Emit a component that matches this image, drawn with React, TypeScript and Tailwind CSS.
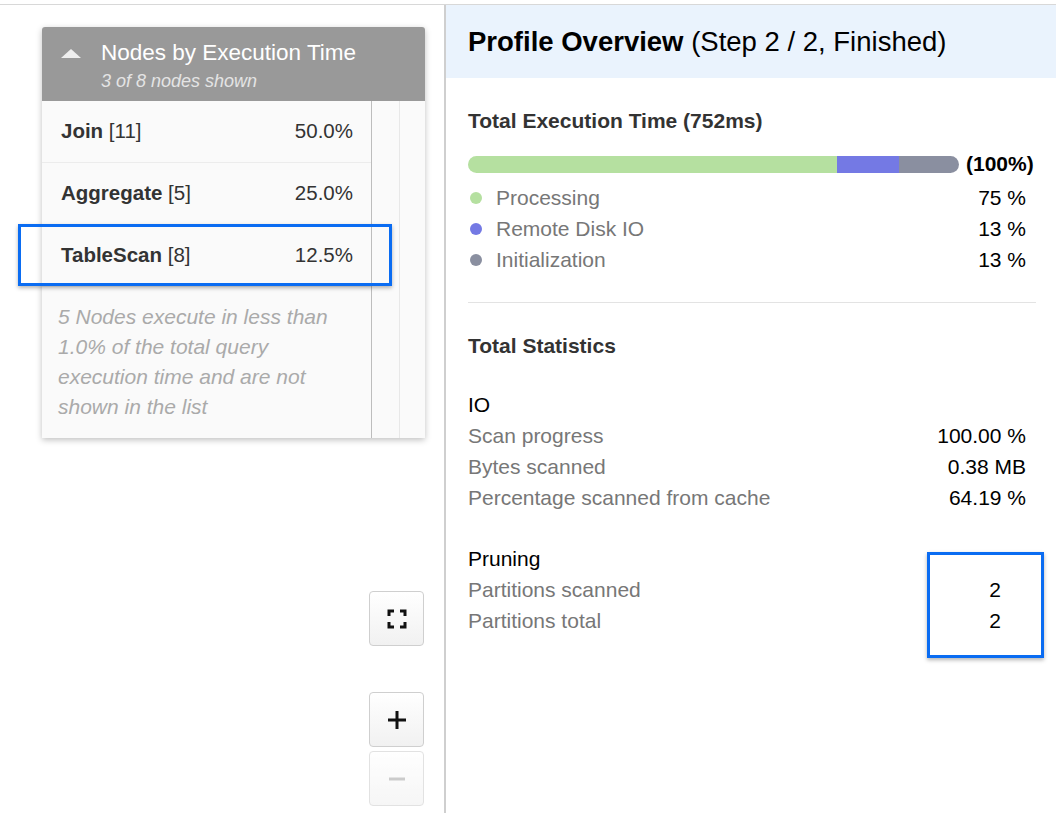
import React from 'react';

const NODES = [
  { name: 'Join', id: 11, pct: '50.0%' },
  { name: 'Aggregate', id: 5, pct: '25.0%' },
  { name: 'TableScan', id: 8, pct: '12.5%' },
];

const LEGEND = [
  { label: 'Processing', value: '75 %', dot: 'bg-[#b5e0a0]' },
  { label: 'Remote Disk IO', value: '13 %', dot: 'bg-[#7479e4]' },
  { label: 'Initialization', value: '13 %', dot: 'bg-[#8a8fa0]' },
];

function StatRow({ label, value }: { label: string; value: string }) {
  return (
    <div className="flex items-center justify-between h-[31px]">
      <span className="text-[#777]">{label}</span>
      <span className="text-black pr-[10px]">{value}</span>
    </div>
  );
}

function NodesCard() {
  return (
    <div className="ml-[42px] mt-[22px] w-[383px] rounded-t-[3px] shadow-[0_2px_6px_rgba(0,0,0,0.25)] bg-white">
      <div className="h-[74px] bg-[#999] rounded-t-[3px] pl-[18px] pt-[10px]">
        <div className="flex items-center">
          <svg width="22" height="12" viewBox="0 0 22 12" className="mr-[19px] mt-[2px]">
            <polygon points="11,1 21,10 1,10" fill="#eee" />
          </svg>
          <span className="text-white text-[22.5px] leading-[32px]">Nodes by Execution Time</span>
        </div>
        <div className="ml-[41px] mt-[2px] text-[18px] italic text-[#e4e4e4] leading-[20px]">3 of 8 nodes shown</div>
      </div>
      <div className="flex h-[337px]">
        <div className="w-[330px] bg-[#fafafa] border-r border-[#bdbdbd]">
          {NODES.map((n) => (
            <div
              key={n.name}
              className="h-[62px] flex items-center justify-between pl-[19px] pr-[18px] border-b border-[#ececec] text-[20.5px] text-[#333]"
            >
              <span>
                <span className="font-bold">{n.name}</span> [{n.id}]
              </span>
              <span>{n.pct}</span>
            </div>
          ))}
          <div className="pl-[16px] pr-[20px] pt-[15px] text-[21px] leading-[30px] italic text-[#aaa]">
            5 Nodes execute in less than 1.0% of the total query execution time and are not shown in the list
          </div>
        </div>
        <div className="w-[28px] bg-[#fafafa] border-r border-[#e8e8e8]" />
        <div className="flex-1 bg-[#fafafa]" />
      </div>
    </div>
  );
}

function MapButton({ children, disabled }: { children: React.ReactNode; disabled?: boolean }) {
  return (
    <button
      className={`w-[55px] h-[55px] rounded-[4px] border border-[#cfcfcf] bg-gradient-to-b from-white to-[#f1f1f1] flex items-center justify-center ${
        disabled ? 'opacity-60' : ''
      }`}
    >
      {children}
    </button>
  );
}

export default function App() {
  return (
    <div className="w-[1056px] h-[813px] bg-white pt-[4px] font-['Liberation_Sans',Arial,sans-serif] overflow-hidden relative">
      <div className="flex h-full border-t border-[#d8d8d8]">
        <div className="w-[446px] flex flex-col border-r-2 border-[#cfcfcf]">
          <NodesCard />
          <div className="flex flex-col items-end mr-[20px] mt-[153px]">
            <MapButton>
              <svg width="20" height="20" viewBox="0 0 20 20">
                <path d="M2 7V2h5M13 2h5v5M18 13v5h-5M7 18H2v-5" fill="none" stroke="#111" strokeWidth="3" />
              </svg>
            </MapButton>
            <div className="h-[46px]" />
            <MapButton>
              <svg width="20" height="20" viewBox="0 0 20 20">
                <path d="M10 1v18M1 10h18" stroke="#111" strokeWidth="3" />
              </svg>
            </MapButton>
            <div className="h-[4px]" />
            <MapButton disabled>
              <svg width="20" height="20" viewBox="0 0 20 20">
                <path d="M2 10h16" stroke="#aaa" strokeWidth="3" />
              </svg>
            </MapButton>
          </div>
        </div>

        <div className="flex-1 flex flex-col">
          <div className="h-[73px] bg-[#eaf3fd] pl-[22px] flex items-center">
            <span className="text-[27.5px] text-black">
              <span className="font-bold">Profile Overview</span> (Step 2 / 2, Finished)
            </span>
          </div>
          <div className="pl-[22px] pr-[20px] text-[21px]">
            <div className="mt-[28px] h-[30px] flex items-center font-bold text-[#333]">Total Execution Time (752ms)</div>
            <div className="mt-[16px] h-[24px] flex items-center">
              <div className="w-[491px] h-[17px] rounded-full overflow-hidden flex">
                <div className="w-[369px] bg-[#b5e0a0]" />
                <div className="w-[62px] bg-[#7479e4]" />
                <div className="flex-1 bg-[#8a8fa0]" />
              </div>
              <span className="ml-[7px] font-bold text-black">(100%)</span>
            </div>
            <div className="mt-[6px]">
              {LEGEND.map((l) => (
                <div key={l.label} className="flex items-center justify-between h-[31px]">
                  <span className="flex items-center text-[#777]">
                    <span className={`w-[12px] h-[12px] rounded-full ml-[2px] mr-[14px] ${l.dot}`} />
                    {l.label}
                  </span>
                  <span className="text-black pr-[10px]">{l.value}</span>
                </div>
              ))}
            </div>
            <div className="mt-[27px] border-t border-[#e3e3e3]" />
            <div className="mt-[28px] h-[30px] flex items-center font-bold text-[#333]">Total Statistics</div>
            <div className="mt-[28px]">
              <div className="h-[31px] flex items-center text-black">IO</div>
              <StatRow label="Scan progress" value="100.00 %" />
              <StatRow label="Bytes scanned" value="0.38 MB" />
              <StatRow label="Percentage scanned from cache" value="64.19 %" />
            </div>
            <div className="mt-[30px]">
              <div className="h-[31px] flex items-center text-black">Pruning</div>
              <div className="flex items-center justify-between h-[31px]">
                <span className="text-[#777]">Partitions scanned</span>
                <span className="text-black pr-[35px]">2</span>
              </div>
              <div className="flex items-center justify-between h-[31px]">
                <span className="text-[#777]">Partitions total</span>
                <span className="text-black pr-[35px]">2</span>
              </div>
            </div>
          </div>
        </div>
      </div>

      <div className="absolute left-[18px] top-[224px] w-[374px] h-[62px] border-[3px] border-[#0a6cf2] shadow-[0_2px_4px_rgba(0,0,0,0.3)]" />
      <div className="absolute left-[927px] top-[552px] w-[117px] h-[106px] border-[3px] border-[#0a6cf2] shadow-[0_2px_4px_rgba(0,0,0,0.3)]" />
    </div>
  );
}
